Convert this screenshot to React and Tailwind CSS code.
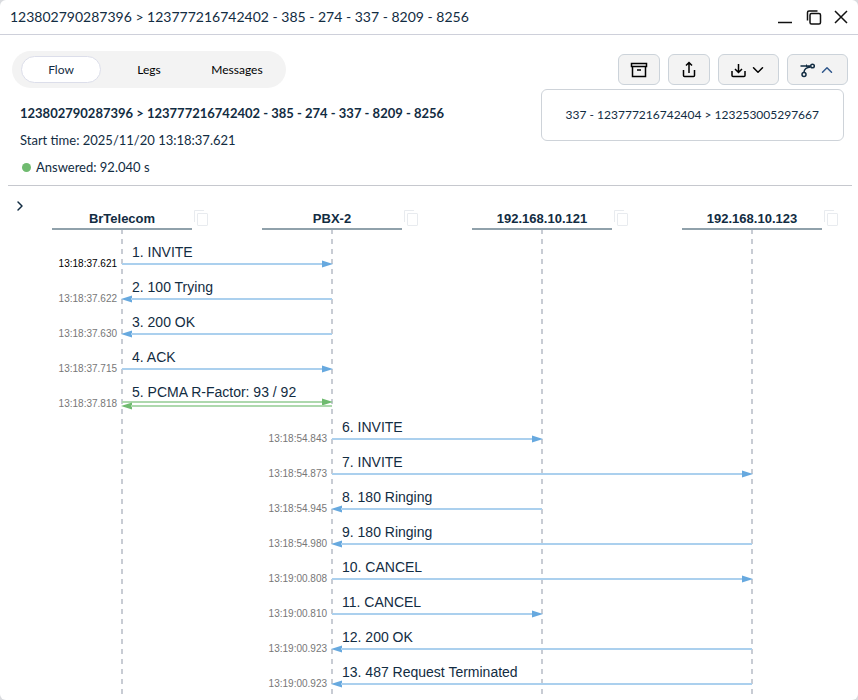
import React from "react";
import { ChevronDown, ChevronRight, ChevronUp } from "lucide-react";

const hosts = ["BrTelecom", "PBX-2", "192.168.10.121", "192.168.10.123"];

// from / to are indexes into hosts
const messages = [
  { time: "13:18:37.621", text: "INVITE", from: 0, to: 1, active: true },
  { time: "13:18:37.622", text: "100 Trying", from: 1, to: 0 },
  { time: "13:18:37.630", text: "200 OK", from: 1, to: 0 },
  { time: "13:18:37.715", text: "ACK", from: 0, to: 1 },
  { time: "13:18:37.818", text: "PCMA R-Factor: 93 / 92", from: 0, to: 1, media: true },
  { time: "13:18:54.843", text: "INVITE", from: 1, to: 2 },
  { time: "13:18:54.873", text: "INVITE", from: 1, to: 3 },
  { time: "13:18:54.945", text: "180 Ringing", from: 2, to: 1 },
  { time: "13:18:54.980", text: "180 Ringing", from: 3, to: 1 },
  { time: "13:19:00.808", text: "CANCEL", from: 1, to: 3 },
  { time: "13:19:00.810", text: "CANCEL", from: 1, to: 2 },
  { time: "13:19:00.923", text: "200 OK", from: 3, to: 1 },
  { time: "13:19:00.923", text: "487 Request Terminated", from: 3, to: 1 },
];

const timeCol = ["col-start-1", "col-start-2", "col-start-3"];
const startCol = ["col-start-2", "col-start-3", "col-start-4"];
const spanCol = { 1: "col-span-1", 2: "col-span-2" };

const toolButton =
  "flex h-[31px] items-center justify-center rounded-md border border-[#ccd3da] bg-[#f3f3f3]";

function Icon({ size = 18, children, ...props }) {
  return (
    <svg
      width={size}
      height={size}
      viewBox={`0 0 ${size} ${size}`}
      fill="none"
      stroke="currentColor"
      strokeWidth="1.5"
      aria-hidden="true"
      {...props}
    >
      {children}
    </svg>
  );
}

function CopyIcon() {
  return (
    <svg width="14" height="16" viewBox="0 0 14 16" fill="none" stroke="currentColor" aria-hidden="true">
      <path d="M0.5 12V0.5H10" />
      <rect x="3.5" y="3.5" width="10" height="12" rx="0.5" />
    </svg>
  );
}

function Line({ left, media }) {
  return (
    <div className={`flex items-center ${left ? "flex-row-reverse" : ""} ${media ? "text-[#70bb70]" : "text-[#67a9df]"}`}>
      <div className={`h-[2px] grow ${media ? "bg-[#add8ad]" : "bg-[#abd0ee]"}`} />
      <svg width="11" height="8" viewBox="0 0 11 8" className="-mx-px -my-[3px]" fill="currentColor" aria-hidden="true">
        <path d={left ? "M11 0.5L0 4L11 7.5Z" : "M0 0.5L11 4L0 7.5Z"} />
      </svg>
    </div>
  );
}

function Message({ msg, index }) {
  const first = Math.min(msg.from, msg.to);
  const span = Math.abs(msg.from - msg.to);
  return (
    <li className="grid h-[35px] grid-cols-[122px_210px_210px_210px]">
      <span
        className={`${timeCol[first]} row-start-1 pt-[18px] pr-[5px] text-right text-[10px] leading-3 ${
          msg.active ? "text-black" : "text-[#777]"
        }`}
      >
        {msg.time}
      </span>
      <div className={`${startCol[first]} ${spanCol[span]} row-start-1`}>
        <p className={`pt-1 pl-[10px] text-sm leading-4 ${msg.media ? "pb-[1px]" : "pb-[3px]"}`}>
          {index + 1}. {msg.text}
        </p>
        <Line left={msg.to < msg.from} media={msg.media} />
        {msg.media && (
          <div className="pt-[2px]">
            <Line left media />
          </div>
        )}
      </div>
    </li>
  );
}

export default function App() {
  return (
    <div className="bg-[#d9dbdf] font-['Lato',sans-serif] text-[#122c42]">
      <main className="min-h-screen rounded-md bg-white">
        <header className="flex h-[35px] items-center justify-between border-b border-[#ced0da] px-[10px]">
          <h1 className="text-sm">123802790287396 &gt; 123777216742402 - 385 - 274 - 337 - 8209 - 8256</h1>
          <div className="flex items-center gap-3 text-[#111]">
            <button aria-label="Minimize">
              <Icon size={16}>
                <path d="M0 13.5H14" />
              </Icon>
            </button>
            <button aria-label="Restore">
              <Icon size={16}>
                <path d="M1.5 11.5V3.5Q1.5 2 3 2H11.5" />
                <rect x="4" y="4.5" width="10.5" height="10.5" rx="1.5" />
              </Icon>
            </button>
            <button aria-label="Close">
              <Icon size={14}>
                <path d="M1 1L13 13M13 1L1 13" />
              </Icon>
            </button>
          </div>
        </header>

        <div className="relative flex items-center justify-between pt-4 pr-[10px] pl-3">
          <nav className="flex h-[37px] items-center gap-2 rounded-full bg-[#f3f3f3] px-[9px] text-xs text-black">
            <button className="h-[27px] w-20 rounded-full border border-[#dcdeea] bg-white text-[#122c42]">Flow</button>
            <button className="h-[27px] w-20">Legs</button>
            <button className="h-[27px] w-20">Messages</button>
          </nav>
          <div className="flex gap-2 text-black">
            <button className={`${toolButton} w-[42px]`} aria-label="Archive">
              <Icon>
                <path d="M1.5 2.5H16.5V5.5H1.5ZM2.5 5.5V15.5H15.5V5.5M7 9H11" />
              </Icon>
            </button>
            <button className={`${toolButton} w-[42px]`} aria-label="Share">
              <Icon>
                <path d="M9 12V2M6 4.5L9 1.5L12 4.5M3.5 9V14.5Q3.5 15.5 4.5 15.5H13.5Q14.5 15.5 14.5 14.5V9" />
              </Icon>
            </button>
            <button className={`${toolButton} w-[61px] gap-[3px]`} aria-label="Download">
              <Icon size={16}>
                <path d="M8.5 2V10M5 7L8.5 10.5L12 7M2 9V13.5Q2 14.5 3 14.5H14Q15 14.5 15 13.5V9" />
              </Icon>
              <ChevronDown size={18} strokeWidth={2} />
            </button>
            <button className={`${toolButton} w-[61px] gap-[3px] text-[#122c42]`} aria-label="Related calls" aria-expanded="true">
              <Icon size={16}>
                <path d="M1.5 4H11M11.5 5Q5.5 5.5 5 10" />
                <path d="M7.5 2.5V5" strokeWidth="1" />
                <circle cx="13.5" cy="4" r="1.8" />
                <circle cx="5" cy="12.5" r="2" />
              </Icon>
              <ChevronUp size={18} strokeWidth={2} className="text-[#31588c]" />
            </button>
          </div>
          <div className="absolute top-[54px] right-[14px] flex h-[52px] items-center rounded-md border border-[#ced3d9] bg-white px-6 text-xs">
            337 - 123777216742404 &gt; 123253005297667
          </div>
        </div>

        <section className="mr-[6px] ml-2 border-b border-[#c6c8ce] pt-[15px] pb-2 pl-3 text-[13px]">
          <h2 className="leading-5 font-bold">123802790287396 &gt; 123777216742402 - 385 - 274 - 337 - 8209 - 8256</h2>
          <p className="pt-[7px] leading-5">Start time: 2025/11/20 13:18:37.621</p>
          <p className="flex items-center gap-[5px] pt-[7px] pl-[2px] leading-5">
            <span className="size-[9px] rounded-full bg-[#70bb70]" />
            Answered: 92.040 s
          </p>
        </section>

        <section className="relative font-['Liberation_Sans',sans-serif]">
          <button className="absolute top-3 left-3" aria-label="Show details">
            <ChevronRight size={16} strokeWidth={2.2} />
          </button>
          <div className="flex gap-[70px] pt-6 pl-[52px]">
            {hosts.map((host) => (
              <div key={host} className="relative w-[140px] shrink-0 border-b-2 border-[#90a1ab] text-center text-[13px] leading-[18px] font-bold">
                {host}
                <button className="absolute top-0 left-full ml-[2px] text-[#e8ebef]" aria-label={`Copy ${host}`}>
                  <CopyIcon />
                </button>
              </div>
            ))}
          </div>
          <div className="relative pt-[10px]">
            <svg className="absolute inset-y-0 left-0 h-full w-full" stroke="#c8ccd4" strokeWidth="2" strokeDasharray="5 5" strokeDashoffset="1" aria-hidden="true">
              {hosts.map((host, i) => (
                <line key={host} x1={122 + i * 210} x2={122 + i * 210} y1="0" y2="100%" />
              ))}
            </svg>
            <ol className="relative">
              {messages.map((msg, i) => (
                <Message key={i} msg={msg} index={i} />
              ))}
            </ol>
          </div>
        </section>
      </main>
    </div>
  );
}
